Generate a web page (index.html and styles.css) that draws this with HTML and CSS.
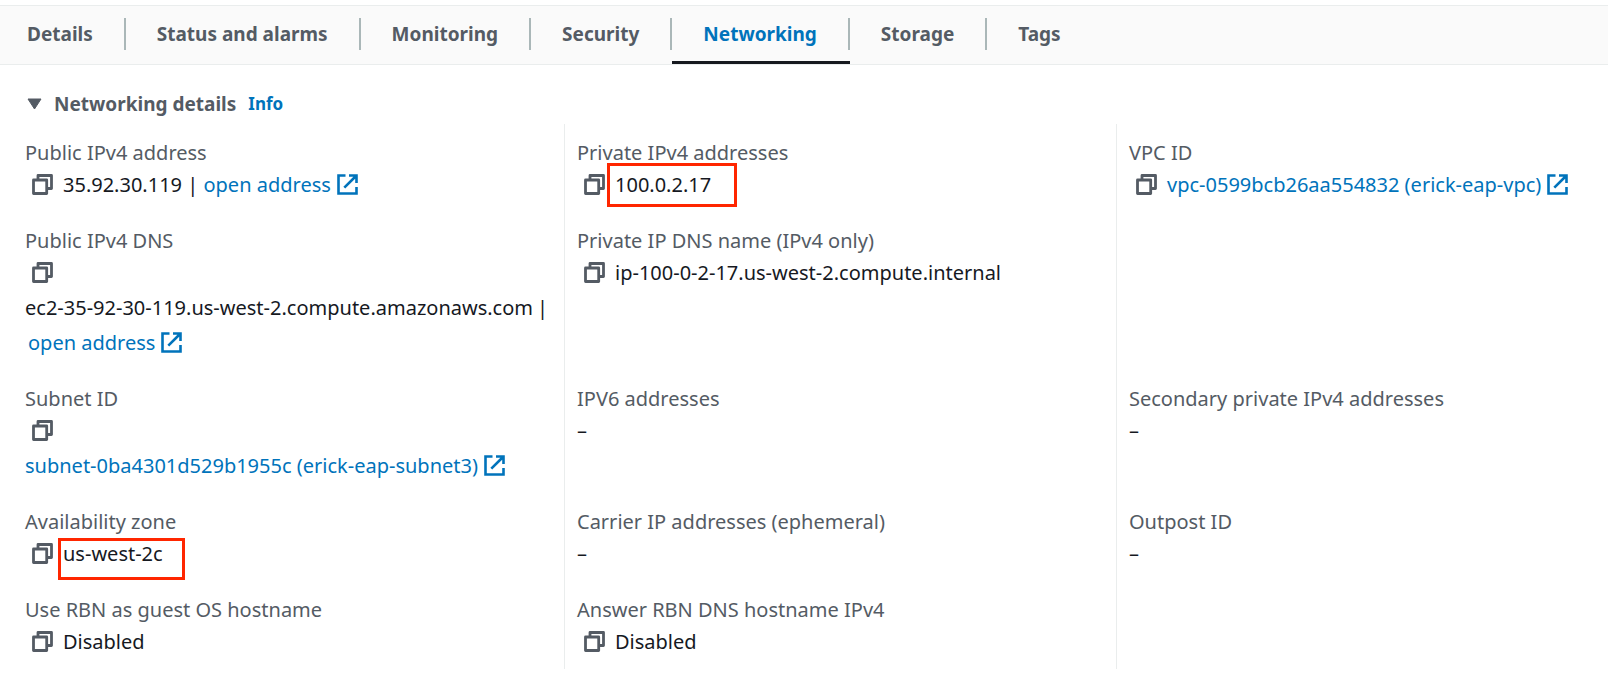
FILE: index.html
```
<!DOCTYPE html>
<html lang="en">
<head>
    <meta charset="UTF-8">
    <meta name="viewport" content="width=device-width, initial-scale=1.0">
    <title>Instance networking</title>
    <link rel="stylesheet" href="styles.css">
</head>
<body>
    <!-- Shared icons -->
    <svg class="sprite" aria-hidden="true">
        <symbol id="copy" viewBox="0 0 21 21">
            <path d="M6 6V1.5H19.5V14.5H15M1.5 6H14.7V19.5H1.5Z" fill="none" stroke="currentColor" stroke-width="2.8" stroke-linejoin="round" />
        </symbol>
        <symbol id="external" viewBox="0 0 21 21">
            <path d="M8.5 1.5H1.5V19.5H19.5V13M12 1.5H19.5V9M19 2L7.3 13.7" fill="none" stroke="currentColor" stroke-width="2.6" />
        </symbol>
    </svg>

    <nav class="tabs" role="tablist">
        <button class="tab" role="tab">Details</button>
        <button class="tab" role="tab">Status and alarms</button>
        <button class="tab" role="tab">Monitoring</button>
        <button class="tab" role="tab">Security</button>
        <button class="tab active" role="tab" aria-selected="true">Networking</button>
        <button class="tab" role="tab">Storage</button>
        <button class="tab" role="tab">Tags</button>
    </nav>

    <main>
        <header class="section-header">
            <button class="toggle" aria-expanded="true">
                <svg class="caret" viewBox="0 0 15 12" aria-hidden="true"><path d="M1 1H14L7.5 11Z" fill="currentColor" stroke="currentColor" stroke-linejoin="round" /></svg>
                Networking details
            </button>
            <a class="info" href="#">Info</a>
        </header>

        <dl class="details">
            <div class="field">
                <dt>Public IPv4 address</dt>
                <dd><button class="copy" aria-label="Copy"><svg class="icon"><use href="#copy" /></svg></button><span>35.92.30.119</span> | <a href="#">open address<svg class="icon"><use href="#external" /></svg></a></dd>
            </div>
            <div class="field">
                <dt>Private IPv4 addresses</dt>
                <dd><button class="copy" aria-label="Copy"><svg class="icon"><use href="#copy" /></svg></button><span class="marked">100.0.2.17</span></dd>
            </div>
            <div class="field">
                <dt>VPC ID</dt>
                <dd><button class="copy" aria-label="Copy"><svg class="icon"><use href="#copy" /></svg></button><a href="#">vpc-0599bcb26aa554832 (erick-eap-vpc)<svg class="icon"><use href="#external" /></svg></a></dd>
            </div>

            <div class="field">
                <dt>Public IPv4 DNS</dt>
                <dd><button class="copy" aria-label="Copy"><svg class="icon"><use href="#copy" /></svg></button><br><span class="host">ec2-35-92-30-119.us-west-2.compute.amazonaws.com</span>|<br><a class="indent" href="#">open address<svg class="icon"><use href="#external" /></svg></a></dd>
            </div>
            <div class="field">
                <dt>Private IP DNS name (IPv4 only)</dt>
                <dd><button class="copy" aria-label="Copy"><svg class="icon"><use href="#copy" /></svg></button><span>ip-100-0-2-17.us-west-2.compute.internal</span></dd>
            </div>
            <div class="field"></div>

            <div class="field">
                <dt>Subnet ID</dt>
                <dd><button class="copy" aria-label="Copy"><svg class="icon"><use href="#copy" /></svg></button><br><a href="#">subnet-0ba4301d529b1955c (erick-eap-subnet3)<svg class="icon"><use href="#external" /></svg></a></dd>
            </div>
            <div class="field">
                <dt>IPV6 addresses</dt>
                <dd>–</dd>
            </div>
            <div class="field">
                <dt>Secondary private IPv4 addresses</dt>
                <dd>–</dd>
            </div>

            <div class="field">
                <dt>Availability zone</dt>
                <dd><button class="copy" aria-label="Copy"><svg class="icon"><use href="#copy" /></svg></button><span class="marked zone">us-west-2c</span></dd>
            </div>
            <div class="field">
                <dt>Carrier IP addresses (ephemeral)</dt>
                <dd>–</dd>
            </div>
            <div class="field">
                <dt>Outpost ID</dt>
                <dd>–</dd>
            </div>

            <div class="field">
                <dt>Use RBN as guest OS hostname</dt>
                <dd><button class="copy" aria-label="Copy"><svg class="icon"><use href="#copy" /></svg></button><span>Disabled</span></dd>
            </div>
            <div class="field">
                <dt>Answer RBN DNS hostname IPv4</dt>
                <dd><button class="copy" aria-label="Copy"><svg class="icon"><use href="#copy" /></svg></button><span>Disabled</span></dd>
            </div>
            <div class="field"></div>
        </dl>
    </main>
</body>
</html>
```
FILE: styles.css
```
*,
*::after {
    box-sizing: border-box;
}
body {
    margin: 0;
    padding-top: 5px;
    background-color: #fff;
    color: #16191f;
    font-family: "Noto Sans", "Open Sans", sans-serif;
    font-size: 20px;
}
button {
    padding: 0;
    border: 0;
    background: none;
    color: #545b64;
    font: inherit;
    cursor: pointer;
}
a {
    color: #0073bb;
    text-decoration: none;
}
a:hover {
    text-decoration: underline;
}
.sprite {
    display: block;
    width: 0;
    height: 0;
}
.icon {
    width: 21px;
    height: 21px;
    vertical-align: -3px;
}

/* Tabs */
.tabs {
    display: flex;
    height: 60px;
    background-color: #fafafa;
    border-top: 1px solid #eaeded;
    border-bottom: 1px solid #eaeded;
}
.tab {
    display: flex;
    align-items: center;
    padding: 0 0 0 31px;
    border-bottom: 3px solid transparent;
    font-size: 19px;
    font-weight: bold;
    white-space: nowrap;
}
.tab:first-child {
    padding-left: 27px;
}
.tab::after {
    content: "";
    width: 2px;
    height: 32px;
    margin-left: 31px;
    background-color: #aab7b8;
}
.tab:last-child::after {
    display: none;
}
.tab.active {
    color: #0073bb;
    border-bottom-color: #16191f;
}

/* Section title */
.section-header {
    display: flex;
    align-items: center;
    gap: 12px;
    padding: 25px 27px 0;
    line-height: 28px;
}
.toggle {
    display: flex;
    align-items: center;
    gap: 12px;
    font-size: 19px;
    font-weight: bold;
}
.caret {
    width: 15px;
    height: 12px;
}
.info {
    font-size: 17px;
    font-weight: bold;
}

/* Field grid */
.details {
    display: grid;
    grid-template-columns: 551fr 552fr 492fr;
    margin: 6px 0 0;
    padding-left: 13px;
}
.field {
    padding: 14px 0 10px 12px;
    white-space: nowrap;
}
.field:not(:nth-child(3n + 1)) {
    border-left: 1px solid #eaeded;
}
dt {
    color: #545b64;
    line-height: 29px;
}
dd {
    margin: 0;
    line-height: 35px;
}
.copy {
    padding: 0 10px 0 7px;
}
dd a .icon {
    margin-left: 6px;
}
.host {
    margin-right: 4px;
}
.indent {
    margin-left: 3px;
}

/* Red highlight around a value */
.marked {
    position: relative;
}
.marked::after {
    content: "";
    position: absolute;
    top: -8px;
    left: -8px;
    width: 130px;
    height: 44px;
    border: 3px solid #ff2600;
}
.marked.zone::after {
    top: -2px;
    left: -5px;
    width: 127px;
    height: 42px;
}
```
